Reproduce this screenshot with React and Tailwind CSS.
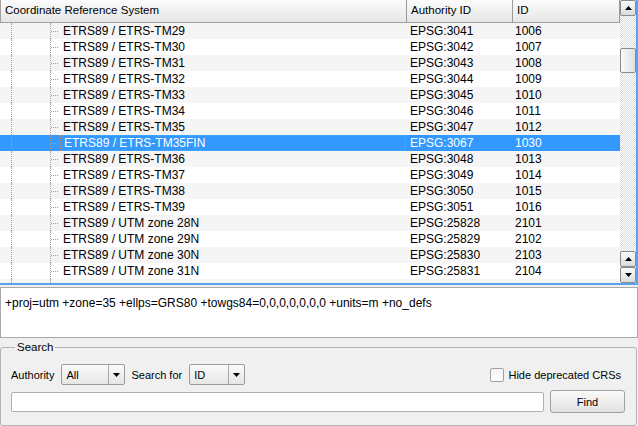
import React from "react";

const rows = [
  ["ETRS89 / ETRS-TM29", "EPSG:3041", "1006"],
  ["ETRS89 / ETRS-TM30", "EPSG:3042", "1007"],
  ["ETRS89 / ETRS-TM31", "EPSG:3043", "1008"],
  ["ETRS89 / ETRS-TM32", "EPSG:3044", "1009"],
  ["ETRS89 / ETRS-TM33", "EPSG:3045", "1010"],
  ["ETRS89 / ETRS-TM34", "EPSG:3046", "1011"],
  ["ETRS89 / ETRS-TM35", "EPSG:3047", "1012"],
  ["ETRS89 / ETRS-TM35FIN", "EPSG:3067", "1030"],
  ["ETRS89 / ETRS-TM36", "EPSG:3048", "1013"],
  ["ETRS89 / ETRS-TM37", "EPSG:3049", "1014"],
  ["ETRS89 / ETRS-TM38", "EPSG:3050", "1015"],
  ["ETRS89 / ETRS-TM39", "EPSG:3051", "1016"],
  ["ETRS89 / UTM zone 28N", "EPSG:25828", "2101"],
  ["ETRS89 / UTM zone 29N", "EPSG:25829", "2102"],
  ["ETRS89 / UTM zone 30N", "EPSG:25830", "2103"],
  ["ETRS89 / UTM zone 31N", "EPSG:25831", "2104"],
  ["", "", ""],
];

const SELECTED = 7;

const Arrow = ({ up }) => (
  <svg width="7" height="4" viewBox="0 0 7 4">
    <path d={up ? "M0 4 L3.5 0 L7 4 Z" : "M0 0 L3.5 4 L7 0 Z"} fill="#000" />
  </svg>
);

const ScrollButton = ({ up }) => (
  <div className="h-[16px] w-[16px] shrink-0 flex items-center justify-center rounded-[2px] border border-[#8a8a8a] bg-gradient-to-b from-[#fbfbfb] to-[#dcdcdc]">
    <Arrow up={up} />
  </div>
);

const Row = ({ row, i }) => {
  const sel = i === SELECTED;
  const bg = sel ? "bg-[#3399ff] text-white" : i % 2 === 0 ? "bg-[#f5f5f5] text-black" : "bg-white text-black";
  return (
    <div className={`flex h-[16px] shrink-0 items-center ${bg}`}>
      <div className="relative h-full w-[60px] shrink-0">
        <span className="absolute left-[11px] top-0 h-full border-l border-dotted border-[#a0a0a0]" />
        <span className="absolute left-[50px] top-0 h-full border-l border-dotted border-[#a0a0a0]" />
        {row[0] && <span className="absolute left-[51px] top-[8px] w-[7px] border-t border-dotted border-[#a0a0a0]" />}
      </div>
      <div className={`h-full w-[346px] shrink-0 flex items-center pl-[3px] ${sel ? "border border-dotted border-[#e8892b]" : ""}`}>
        {row[0]}
      </div>
      <div className="w-[106px] shrink-0 pl-[4px]">{row[1]}</div>
      <div className="w-[107px] shrink-0 pl-[3px]">{row[2]}</div>
    </div>
  );
};

const Combo = ({ value, w }) => (
  <div className={`flex h-[21px] ${w} items-center rounded-[2px] border border-[#9c9c9c] bg-gradient-to-b from-[#fafafa] to-[#e6e6e6]`}>
    <span className="flex-1 pl-[4px]">{value}</span>
    <span className="flex h-full w-[16px] items-center justify-center border-l border-[#a8a8a8]">
      <Arrow />
    </span>
  </div>
);

export default function App() {
  return (
    <div className="flex h-[426px] w-[638px] flex-col overflow-hidden bg-[#f0f0f0] text-[12px] text-black font-['Liberation_Sans',Arial,sans-serif]">
      {/* table */}
      <div className="flex h-[285px] shrink-0 border-b-2 border-r-2 border-[#5aa2ec] bg-white">
        <div className="flex w-[620px] flex-col overflow-hidden">
          <div className="flex h-[23px] shrink-0 text-[11.5px] bg-gradient-to-b from-[#fbfbfb] to-[#e6e6e6] border-b border-[#a0a0a0]">
            <div className="w-[407px] flex items-center pl-[4px] border-r border-[#9a9a9a] border-l border-l-[#a0a0a0]">Coordinate Reference System</div>
            <div className="w-[106px] flex items-center pl-[4px] border-r border-[#9a9a9a]">Authority ID</div>
            <div className="w-[107px] flex items-center pl-[4px] border-r border-[#9a9a9a]">ID</div>
          </div>
          {rows.map((r, i) => (
            <Row key={i} row={r} i={i} />
          ))}
        </div>
        <div className="flex w-[16px] flex-col bg-[repeating-conic-gradient(#dcdcdc_0%_25%,#ffffff_0%_50%)] bg-[length:2px_2px]">
          <ScrollButton up />
          <div className="h-[32px] shrink-0" />
          <div className="h-[25px] w-[16px] shrink-0 rounded-[2px] border border-[#8a8a8a] bg-gradient-to-r from-[#fafafa] to-[#e0e0e0]" />
          <div className="flex-1" />
          <ScrollButton up />
          <ScrollButton />
        </div>
      </div>

      {/* proj string */}
      <div className="mt-[2px] h-[51px] shrink-0 border border-[#a8a8a8] bg-white px-[4px] pt-[6px] text-[12px]">
        +proj=utm +zone=35 +ellps=GRS80 +towgs84=0,0,0,0,0,0,0 +units=m +no_defs
      </div>

      {/* search group */}
      <fieldset className="mt-[1px] mr-[1px] flex-1 rounded-[3px] border border-[#b4b4b4] px-[10px] pt-[8px] text-[11px]">
        <legend className="ml-[4px] px-[2px] text-[11.5px]">Search</legend>
        <div className="flex h-[21px] items-center">
          <span className="mr-[7px]">Authority</span>
          <Combo value="All" w="w-[64px]" />
          <span className="ml-[6px] mr-[7px]">Search for</span>
          <Combo value="ID" w="w-[56px]" />
          <div className="ml-auto flex items-center">
            <span className="h-[14px] w-[14px] rounded-[2px] border border-[#a0a0a0] bg-gradient-to-b from-[#f4f4f4] to-white" />
            <span className="ml-[4px] mr-[5px]">Hide deprecated CRSs</span>
          </div>
        </div>
        <div className="mt-[5px] flex items-center">
          <div className="h-[20px] w-[533px] rounded-[2px] border border-[#b0b0b0] bg-white" />
          <div className="ml-[6px] flex h-[23px] w-[75px] items-center justify-center rounded-[3px] border border-[#a0a0a0] bg-gradient-to-b from-[#fafafa] to-[#e2e2e2]">
            Find
          </div>
        </div>
      </fieldset>
    </div>
  );
}
